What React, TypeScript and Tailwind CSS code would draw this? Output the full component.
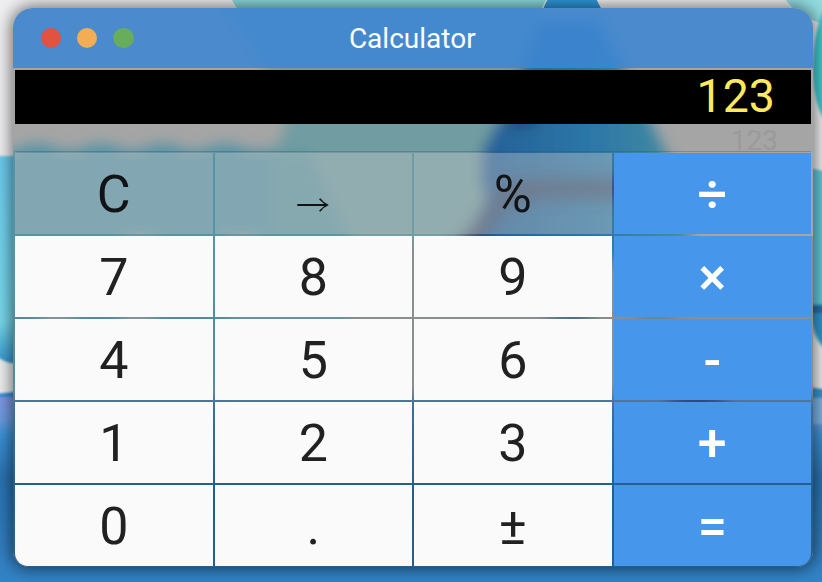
import React from "react";

type Key = { label: string; kind: "function" | "digit" | "operator" };

const keys: Key[] = [
  { label: "C", kind: "function" },
  { label: "→", kind: "function" },
  { label: "%", kind: "function" },
  { label: "÷", kind: "operator" },
  { label: "7", kind: "digit" },
  { label: "8", kind: "digit" },
  { label: "9", kind: "digit" },
  { label: "×", kind: "operator" },
  { label: "4", kind: "digit" },
  { label: "5", kind: "digit" },
  { label: "6", kind: "digit" },
  { label: "-", kind: "operator" },
  { label: "1", kind: "digit" },
  { label: "2", kind: "digit" },
  { label: "3", kind: "digit" },
  { label: "+", kind: "operator" },
  { label: "0", kind: "digit" },
  { label: ".", kind: "digit" },
  { label: "±", kind: "digit" },
  { label: "=", kind: "operator" },
];

const keyStyles = {
  function: "bg-[#c6c6c6]/40 text-[#101416]",
  digit: "bg-[#fafafa] text-[#212121]",
  operator: "bg-[#4696ec] font-medium text-white",
};

// Desktop scenery behind the window
function Wallpaper() {
  return (
    <svg className="absolute inset-0 h-full w-full" viewBox="0 0 822 582" aria-hidden="true">
      <defs>
        <linearGradient id="sea" x1="0" y1="0" x2="0" y2="1">
          <stop offset="0" stopColor="#8298e4" />
          <stop offset="0.12" stopColor="#6c9ce0" />
          <stop offset="0.2" stopColor="#3d92d6" />
          <stop offset="0.42" stopColor="#2b73b2" />
          <stop offset="1" stopColor="#3485c8" />
        </linearGradient>
        <linearGradient id="pool" x1="0" y1="0" x2="0" y2="1">
          <stop offset="0" stopColor="#6ccbee" />
          <stop offset="0.8" stopColor="#79d9ec" />
          <stop offset="1" stopColor="#3597cf" />
        </linearGradient>
        <filter id="soft"><feGaussianBlur stdDeviation="1.2" /></filter>
      </defs>
      <rect width="822" height="582" fill="#efeff1" />
      <path d="M232 0Q240 16 260 30H530L546 0Z" fill="#8bdcdf" />
      <path d="M540 20Q545 0 552 -6H594Q600 8 610 24Z" fill="#2f99de" />
      <path d="M786 0Q795 14 822 24V0Z" fill="#91dce0" />
      <g filter="url(#soft)">
        <path d="M-5 156H100V363H10Q2 361 -5 355Z" fill="url(#pool)" />
        <path d="M-5 394Q10 393 40 387V400H-5Z" fill="#2e90dc" />
        <rect x="-5" y="397" width="832" height="190" fill="url(#sea)" />
        <path d="M827 2Q813 28 813 70Q814 108 827 124Z" fill="#40cbd0" />
        <path d="M800 166Q812 168 827 172V390H800Z" fill="#64c9db" />
        <path d="M800 304H827V350Q813 338 810 304Z" fill="#2f96cf" />
        <rect x="800" y="306" width="27" height="7" fill="#2c6da4" />
        <path d="M810 318Q813 342 827 351V389L810 387Z" fill="#efeff1" />
        <path d="M810 387L827 390V398H810Z" fill="#3398d2" />
        <rect x="810" y="398" width="17" height="26" fill="#7eb6e8" />
      </g>
    </svg>
  );
}

// Frosted scenery showing through the translucent window surface
function FrostedBackdrop() {
  return (
    <svg className="absolute inset-0 h-full w-full" viewBox="13 8 800 559" preserveAspectRatio="none" aria-hidden="true">
      <defs>
        <linearGradient id="deep" x1="0" y1="0" x2="0" y2="1">
          <stop offset="0" stopColor="#406f9f" />
          <stop offset="0.5" stopColor="#245e8d" />
          <stop offset="1" stopColor="#255e89" />
        </linearGradient>
        <linearGradient id="fin" x1="0" y1="0" x2="1" y2="0">
          <stop offset="0" stopColor="#225a93" />
          <stop offset="0.6" stopColor="#2d78a7" />
          <stop offset="1" stopColor="#468d9f" />
        </linearGradient>
        <filter id="frost" x="-20%" y="-20%" width="140%" height="140%"><feGaussianBlur stdDeviation="7" /></filter>
        <filter id="frostWide" x="-30%" y="-30%" width="160%" height="160%"><feGaussianBlur stdDeviation="9" /></filter>
      </defs>
      <rect x="0" y="0" width="840" height="590" fill="#a5a5a5" />
      <rect x="0" y="236" width="840" height="170" fill="#8a8e8f" />
      <g filter="url(#frost)">
        <path d="M-20 150H350V320H-20Z" fill="#5593a5" />
        <ellipse cx="38" cy="151" rx="20" ry="7" fill="#5593a5" />
        <ellipse cx="101" cy="151" rx="20" ry="7" fill="#5593a5" />
        <ellipse cx="163" cy="151" rx="20" ry="7" fill="#5593a5" />
        <ellipse cx="225" cy="151" rx="20" ry="7" fill="#5593a5" />
        <path d="M220 0H550L510 122L495 245H342L310 151H274L288 122L260 60Z" fill="#719da2" />
        <path d="M274 151H310L355 250H274Z" fill="#5d96a2" />
        <path d="M502 115L540 20H600L645 110L665 150L690 215V260H456L478 225L488 200L480 180L482 150Z" fill="url(#fin)" />
        <path d="M510 112H546L530 127L508 126Z" fill="#1b4672" />
        <ellipse cx="140" cy="242" rx="22" ry="7" fill="#839ba1" />
        <ellipse cx="242" cy="242" rx="22" ry="7" fill="#839ba1" />
        <path d="M-10 305H230V390H-10Z" fill="#528b9c" />
        <ellipse cx="58" cy="319" rx="18" ry="8" fill="#909799" />
        <ellipse cx="138" cy="319" rx="18" ry="8" fill="#909799" />
        <rect x="-10" y="396" width="850" height="190" fill="url(#deep)" />
        <ellipse cx="571" cy="319" rx="24" ry="5" fill="#145778" />
        <ellipse cx="656" cy="319" rx="20" ry="5" fill="#497f91" />
        <ellipse cx="697" cy="402" rx="32" ry="8" fill="#143867" />
      </g>
      <g filter="url(#frostWide)">
        <path d="M452 252L476 224L502 186L540 180H640V197H540L502 208L474 252Z" fill="#3d3850" opacity="0.75" />
      </g>
    </svg>
  );
}

function Arrow() {
  return (
    <svg className="mt-[21px] h-4 w-8" viewBox="0 0 32 16" role="img" aria-label="→">
      <path d="M0.3 7H27.2L22 2.2L23.4 1.3Q26.5 5.8 31.8 8Q26.5 10.2 23.4 14.7L22 13.8L27.2 9H0.3Z" fill="#101416" />
    </svg>
  );
}

export default function App() {
  return (
    <main className="relative h-[582px] w-[822px] overflow-hidden pt-2 pl-[13px] font-['Roboto',sans-serif]">
      <Wallpaper />
      <div className="relative h-[559px] w-[800px] rounded-t-[20px] rounded-b-[16px] shadow-[0_0_16px_2px_rgba(0,0,0,0.55)]">
        <section className="relative flex h-full flex-col overflow-hidden rounded-t-[20px] rounded-b-[16px]">
          <FrostedBackdrop />
          <header className="relative flex h-[60px] shrink-0 items-center bg-[#3d86d3]/88 pl-[28px]">
            <div className="flex gap-[15.7px]">
              <span className="size-[20.4px] rounded-full bg-[#e25241]" />
              <span className="size-[20.4px] rounded-full bg-[#f3ad55]" />
              <span className="size-[20.4px] rounded-full bg-[#67ad5b]" />
            </div>
            <h1 className="flex-1 pt-[2px] pr-[135px] pl-[13px] text-center text-[28px] leading-none text-white">Calculator</h1>
          </header>
          <div className="relative mx-[2px] mt-[2px] flex h-[54px] shrink-0 items-center justify-end bg-black pr-[36px] pb-[2px] text-[46.5px] leading-none text-[#ffe95c]">
            123
          </div>
          <div className="relative mx-[2px] flex h-[28px] shrink-0 items-end justify-end border-b border-[#40525a]/35 pr-[33px] text-[28px] leading-[21px] text-[#9a9a9a]">
            123
          </div>
          <div className="relative mx-[2px] mt-[1px] mb-[1px] grid flex-1 grid-cols-4 grid-rows-5 gap-[2px] overflow-hidden rounded-b-[13px]">
            {keys.map(({ label, kind }) => (
              <button
                key={label}
                className={`flex items-center justify-center pt-[2px] text-[52px] leading-none ${keyStyles[kind]}`}
              >
                {label === "→" ? <Arrow /> : label}
              </button>
            ))}
          </div>
        </section>
      </div>
    </main>
  );
}
